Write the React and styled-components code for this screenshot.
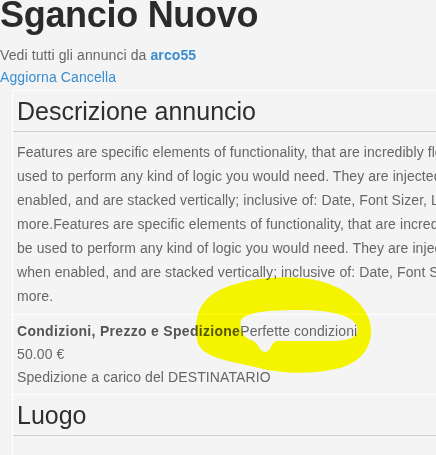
import styled, { createGlobalStyle } from 'styled-components';

const GlobalStyle = createGlobalStyle`
  html, body {
    margin: 0;
    padding: 0;
    overflow: hidden;
    background: #f4f4f4;
  }
  body {
    font-family: "Liberation Sans", Arial, Helvetica, sans-serif;
    font-size: 14px;
    color: #666;
  }
`;

const Page = styled.div`
  position: relative;
  width: 436px;
  height: 455px;
  overflow: hidden;
`;

const Title = styled.h1`
  margin: -5px 0 9px;
  font-size: 36px;
  line-height: 40px;
  font-weight: 700;
  letter-spacing: -0.3px;
  color: #2b2b2b;
  white-space: nowrap;
`;

const Meta = styled.div`
  margin-bottom: 2px;
`;

const MetaLine = styled.div`
  line-height: 22px;
  letter-spacing: 0.1px;
  white-space: nowrap;
`;

const Link = styled.a`
  color: #3a8dd0;
  text-decoration: none;
  font-weight: ${p => (p.$bold ? 700 : 400)};
`;

const Panel = styled.div`
  margin-left: 12px;
  width: 640px;
  min-height: 400px;
  border-left: 1px solid #fff;
`;

const Section = styled.section`
  border-top: 1px solid #fff;
  padding: 5px 0 5px 4px;
`;

const SectionTitle = styled.h2`
  margin: 0 0 0 -4px;
  padding: 0 0 5px 4px;
  font-size: 25px;
  line-height: 30px;
  font-weight: 400;
  color: #2f2f2f;
  border-bottom: 1px solid #cfcfcf;
`;

const Description = styled.p`
  margin: 8px 0 1px;
  line-height: 24px;
  letter-spacing: 0.08px;
  white-space: nowrap;
`;

const Details = styled.div`
  line-height: 23px;
  letter-spacing: 0.1px;
  white-space: nowrap;
`;

const Label = styled.strong`
  color: #555;
  letter-spacing: 0.3px;
`;

const Highlight = styled.svg`
  position: absolute;
  left: 0;
  top: 0;
  pointer-events: none;
  mix-blend-mode: multiply;
`;

const lines = [
  'Features are specific elements of functionality, that are incredibly flexible and can be',
  'used to perform any kind of logic you would need. They are injected into positions when',
  'enabled, and are stacked vertically; inclusive of: Date, Font Sizer, Login Form and',
  'more.Features are specific elements of functionality, that are incredibly flexible and can',
  'be used to perform any kind of logic you would need. They are injected into positions',
  'when enabled, and are stacked vertically; inclusive of: Date, Font Sizer, Login Form and',
  'more.',
];

function App() {
  return (
    <>
      <GlobalStyle />
      <Page>
        <Title>Sgancio Nuovo</Title>
        <Meta>
          <MetaLine>
            Vedi tutti gli annunci da <Link href="#" $bold>arco55</Link>
          </MetaLine>
          <MetaLine>
            <Link href="#">Aggiorna</Link> <Link href="#">Cancella</Link>
          </MetaLine>
        </Meta>
        <Panel>
          <Section>
            <SectionTitle>Descrizione annuncio</SectionTitle>
            <Description>
              {lines.map((l, i) => (
                <span key={i}>
                  {l}
                  {i < lines.length - 1 && <br />}
                </span>
              ))}
            </Description>
          </Section>
          <Section>
            <Details>
              <div>
                <Label>Condizioni, Prezzo e Spedizione</Label>Perfette condizioni
              </div>
              <div>50.00 €</div>
              <div>Spedizione a carico del DESTINATARIO</div>
            </Details>
          </Section>
          <Section>
            <SectionTitle>Luogo</SectionTitle>
          </Section>
        </Panel>
        {/* hand-drawn yellow marker loop around the condition */}
        <Highlight width="436" height="455" viewBox="0 0 436 455">
          <path
            fill="#ffff00"
            fillRule="evenodd"
            d="M197,340 C194,316 199,299 224,288 C250,277 290,274 320,281 C345,288 364,302 370,322 C374,342 366,360 340,368 C315,375 280,374 255,367 C230,361 200,358 197,340 Z
               M241,320 C246,312 270,310 300,310 C330,310 352,315 357,326 C360,336 352,341 330,341 L276,341 C271,343 271,352 265,352 C259,352 259,342 251,340 C243,338 239,328 241,320 Z"
          />
        </Highlight>
      </Page>
    </>
  );
}

export default App;
